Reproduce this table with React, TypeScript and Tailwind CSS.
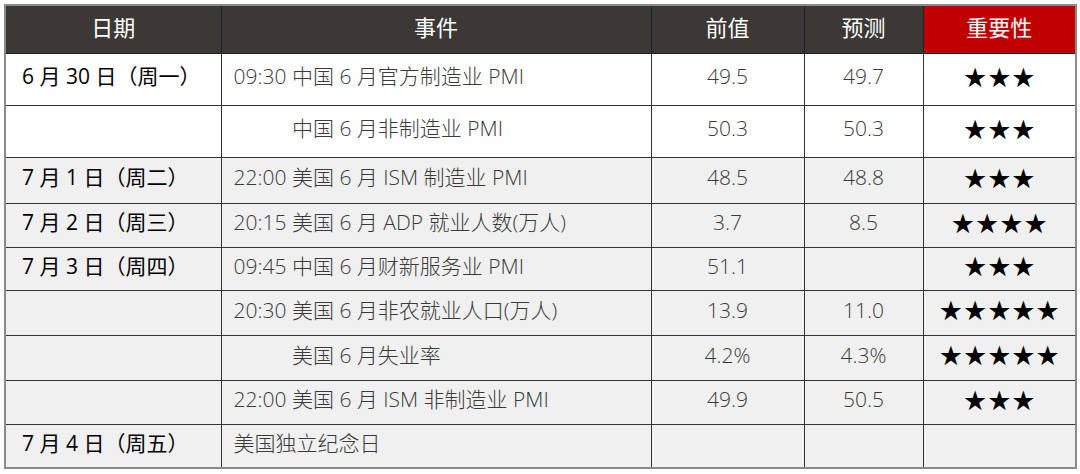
const rows = [
  { date: "6 月 30 日（周一）", time: "09:30", event: "中国 6 月官方制造业 PMI", prev: "49.5", fc: "49.7", stars: 3, h: "h-[52px]", gray: false },
  { date: "", time: "09:30", hideTime: true, event: "中国 6 月非制造业 PMI", prev: "50.3", fc: "50.3", stars: 3, h: "h-[52px]", gray: false },
  { date: "7 月 1 日（周二）", time: "22:00", event: "美国 6 月 ISM 制造业 PMI", prev: "48.5", fc: "48.8", stars: 3, h: "h-[46px]", gray: true },
  { date: "7 月 2 日（周三）", time: "20:15", event: "美国 6 月 ADP 就业人数(万人)", prev: "3.7", fc: "8.5", stars: 4, h: "h-[44px]", gray: true },
  { date: "7 月 3 日（周四）", time: "09:45", event: "中国 6 月财新服务业 PMI", prev: "51.1", fc: "", stars: 3, h: "h-[43px]", gray: true },
  { date: "", time: "20:30", event: "美国 6 月非农就业人口(万人)", prev: "13.9", fc: "11.0", stars: 5, h: "h-[45px]", gray: true },
  { date: "", time: "20:30", hideTime: true, event: "美国 6 月失业率", prev: "4.2%", fc: "4.3%", stars: 5, h: "h-[45px]", gray: true },
  { date: "", time: "22:00", event: "美国 6 月 ISM 非制造业 PMI", prev: "49.9", fc: "50.5", stars: 3, h: "h-[44px]", gray: true },
  { date: "7 月 4 日（周五）", time: "", event: "美国独立纪念日", prev: "", fc: "", stars: 0, h: "h-[44px]", gray: true },
]

const font = { fontFamily: '"Open Sans", "Noto Sans CJK SC", sans-serif' }

export default function App() {
  return (
    <div className="h-[474px] w-[1080px] bg-white pl-[4px] pt-[4px]" style={font}>
      <table className="w-[1071px] table-fixed border-collapse border-2 border-[#8a8a8a] text-[21px]">
        <colgroup>
          <col className="w-[216px]" />
          <col className="w-[430px]" />
          <col className="w-[153px]" />
          <col className="w-[119px]" />
          <col className="w-[153px]" />
        </colgroup>
        <thead>
          <tr className="h-[48px] bg-[#3b3836] text-[22px] text-white">
            <th className="border border-[#222] pb-[4px] font-normal">日期</th>
            <th className="border border-[#222] pb-[4px] font-normal">事件</th>
            <th className="border border-[#222] pb-[4px] font-normal">前值</th>
            <th className="border border-[#222] pb-[4px] font-normal">预测</th>
            <th className="border border-[#222] bg-[#c00000] pb-[4px] font-normal">重要性</th>
          </tr>
        </thead>
        <tbody>
          {rows.map((r, i) => (
            <tr key={i} className={`${r.h} ${r.gray ? "bg-[#f0f0f0]" : "bg-white"}`}>
              <td className="whitespace-nowrap border border-[#333] pb-[4px] pl-[16px] font-normal text-black">{r.date}</td>
              <td className="whitespace-nowrap border border-[#333] pb-[4px] pl-[12px] font-light text-[#3a3a3a]">
                {r.time && (
                  <span className={r.hideTime ? "invisible" : ""}>{r.time} </span>
                )}
                {r.event}
              </td>
              <td className="border border-[#333] pb-[4px] text-center font-light text-[#3a3a3a]">{r.prev}</td>
              <td className="border border-[#333] pb-[4px] text-center font-light text-[#3a3a3a]">{r.fc}</td>
              <td
                className="border border-[#333] pb-[4px] text-center text-[27px] leading-none text-black"
                style={{ fontFamily: '"DejaVu Sans", sans-serif' }}
              >
                {"★".repeat(r.stars)}
              </td>
            </tr>
          ))}
        </tbody>
      </table>
    </div>
  )
}
